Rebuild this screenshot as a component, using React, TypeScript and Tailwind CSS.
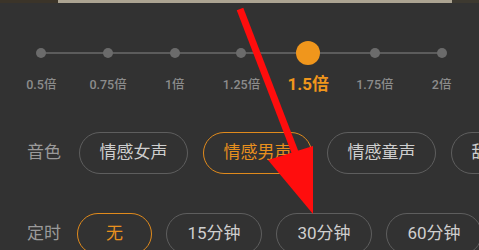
import React from "react";

const speeds = ["0.5倍", "0.75倍", "1倍", "1.25倍", "1.5倍", "1.75倍", "2倍"];
const voices = ["情感女声", "情感男声", "情感童声", "甜美女声"];
const timers = ["无", "15分钟", "30分钟", "60分钟"];

export default function App() {
  const active = 4;

  return (
    <div
      className="relative w-[479px] h-[250px] overflow-hidden bg-[#323232]"
      style={{ fontFamily: 'Roboto, "Noto Sans CJK SC", sans-serif' }}
    >
      {/* top strip of cover image */}
      <div className="flex h-[3px]">
        <div className="w-[58px] bg-[#3b3429]" />
        <div className="w-[394px] bg-[#aca492]" />
        <div className="flex-1 bg-[#3d3930]" />
      </div>

      {/* speed slider */}
      <div className="relative ml-[8px] mt-[38px] w-[467px]">
        <div className="absolute left-[33px] right-[33px] top-[11px] h-[2px] bg-[#5c5c5c]" />
        <div className="relative grid grid-cols-7">
          {speeds.map((s, i) => (
            <div key={s} className="flex flex-col items-center">
              <div className="flex h-[24px] items-center justify-center">
                {i === active ? (
                  <div className="h-[24px] w-[24px] rounded-full bg-[#f0961c]" />
                ) : (
                  <div className="h-[10px] w-[10px] rounded-full bg-[#6b6b6b]" />
                )}
              </div>
              <div className="mt-[8px] flex h-[24px] items-center">
                {i === active ? (
                  <span className="text-[17px] font-bold text-[#f0961c]">{s}</span>
                ) : (
                  <span className="text-[12.5px] font-medium text-[#8c8c8c]">{s}</span>
                )}
              </div>
            </div>
          ))}
        </div>
      </div>

      {/* voice row */}
      <div className="mt-[35px] flex items-center pl-[27px]">
        <span className="w-[35px] shrink-0 text-[17px] text-[#9a9a9a]">音色</span>
        <div className="ml-[17px] flex gap-[15px]">
          {voices.map((v, i) => (
            <div
              key={v}
              className={`flex h-[42px] w-[109px] shrink-0 items-center justify-center rounded-full border-[1.5px] text-[17px] ${
                i === 1
                  ? "border-[#e08a1c] text-[#e8901e]"
                  : "border-[#5e5e5e] text-[#cfcfcf]"
              }`}
            >
              {v}
            </div>
          ))}
        </div>
      </div>

      {/* timer row */}
      <div className="mt-[39px] flex items-center pl-[27px]">
        <span className="w-[35px] shrink-0 text-[17px] text-[#9a9a9a]">定时</span>
        <div className="ml-[15px] flex gap-[14px]">
          {timers.map((t, i) => (
            <div
              key={t}
              className={`flex h-[42px] shrink-0 items-center justify-center rounded-full border-[1.5px] text-[17px] ${
                i === 0
                  ? "w-[75px] border-[#e08a1c] text-[#e8901e]"
                  : "w-[96px] border-[#5e5e5e] text-[#cfcfcf]"
              }`}
            >
              {t}
            </div>
          ))}
        </div>
      </div>

      {/* red annotation arrow */}
      <svg className="absolute left-0 top-0" width="479" height="250" viewBox="0 0 479 250">
        <line x1="240" y1="9" x2="298" y2="160" stroke="#ff0d0d" strokeWidth="7" />
        <polygon points="268,160 313,146 313,214" fill="#ff0d0d" />
      </svg>
    </div>
  );
}
